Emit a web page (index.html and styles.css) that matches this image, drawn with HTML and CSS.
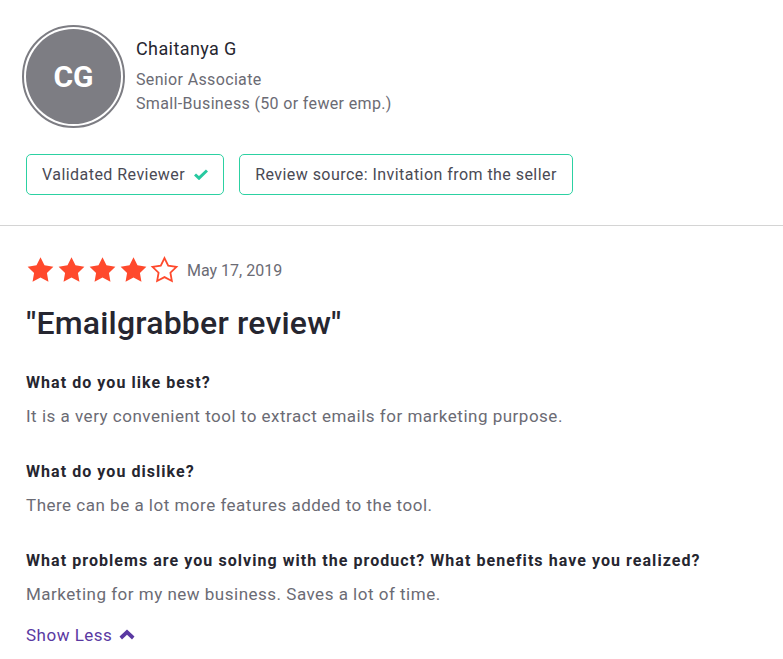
FILE: index.html
```html
<!DOCTYPE html>
<html lang="en">
<head>
    <meta charset="UTF-8">
    <meta name="viewport" content="width=device-width, initial-scale=1.0">
    <title>Review</title>
    <link rel="stylesheet" href="styles.css">
</head>
<body>
    <div class="reviewer">
        <div class="profile">
            <div class="avatar">
                <div class="avatar-inner">CG</div>
            </div>
            <div class="profile-info">
                <div class="name">Chaitanya G</div>
                <div class="meta">Senior Associate</div>
                <div class="meta">Small-Business (50 or fewer emp.)</div>
            </div>
        </div>
        <div class="badges">
            <div class="badge">
                Validated Reviewer
                <svg class="check" viewBox="0 0 14 11" width="14" height="11">
                    <path d="M1 5.5 L5 9.2 L13 1.5" fill="none" stroke="#27c9a0" stroke-width="3"/>
                </svg>
            </div>
            <div class="badge">Review source: Invitation from the seller</div>
        </div>
    </div>

    <div class="review">
        <div class="rating">
            <div class="stars">
                <svg class="star" viewBox="1 1 22 21"><path d="M12 2l3.09 6.26L22 9.27l-5 4.87 1.18 6.88L12 17.77l-6.18 3.25L7 14.14 2 9.27l6.91-1.01L12 2z" fill="#ff492c"/></svg>
                <svg class="star" viewBox="1 1 22 21"><path d="M12 2l3.09 6.26L22 9.27l-5 4.87 1.18 6.88L12 17.77l-6.18 3.25L7 14.14 2 9.27l6.91-1.01L12 2z" fill="#ff492c"/></svg>
                <svg class="star" viewBox="1 1 22 21"><path d="M12 2l3.09 6.26L22 9.27l-5 4.87 1.18 6.88L12 17.77l-6.18 3.25L7 14.14 2 9.27l6.91-1.01L12 2z" fill="#ff492c"/></svg>
                <svg class="star" viewBox="1 1 22 21"><path d="M12 2l3.09 6.26L22 9.27l-5 4.87 1.18 6.88L12 17.77l-6.18 3.25L7 14.14 2 9.27l6.91-1.01L12 2z" fill="#ff492c"/></svg>
                <svg class="star" viewBox="1 1 22 21"><path d="M12 2.6l2.9 5.9 6.4.9-4.7 4.6 1.1 6.4-5.7-3-5.7 3 1.1-6.4-4.7-4.6 6.4-.9z" fill="#fff" stroke="#ff492c" stroke-width="1.4"/></svg>
            </div>
            <span class="date">May 17, 2019</span>
        </div>

        <h2 class="title">"Emailgrabber review"</h2>

        <div class="qa">
            <div class="question">What do you like best?</div>
            <div class="answer">It is a very convenient tool to extract emails for marketing purpose.</div>
        </div>
        <div class="qa">
            <div class="question">What do you dislike?</div>
            <div class="answer">There can be a lot more features added to the tool.</div>
        </div>
        <div class="qa">
            <div class="question">What problems are you solving with the product? What benefits have you realized?</div>
            <div class="answer">Marketing for my new business. Saves a lot of time.</div>
        </div>

        <a class="show-less" href="#">
            Show Less
            <svg viewBox="0 0 16 12" width="16" height="12">
                <path d="M8 0.5 L15.5 7.5 L13 10.5 L8 5.8 L3 10.5 L0.5 7.5 Z" fill="#5a39a2"/>
            </svg>
        </a>
    </div>
</body>
</html>
```

FILE: styles.css
```css
/* styles.css */
body {
    margin: 0;
    background-color: #ffffff;
    font-family: Roboto, "Liberation Sans", sans-serif;
    color: #262630;
}

.reviewer {
    padding: 25px 26px 30px 22px;
    border-bottom: 1px solid #d4d4d4;
}

.profile {
    display: flex;
    gap: 11px;
}

.avatar {
    width: 95px;
    height: 95px;
    padding: 2px;
    border: 2px solid #7d7d83;
    border-radius: 50%;
    background-color: #ffffff;
}

.avatar-inner {
    width: 100%;
    height: 100%;
    border-radius: 50%;
    background-color: #7d7d83;
    color: #ffffff;
    font-size: 30px;
    font-weight: bold;
    display: flex;
    justify-content: center;
    align-items: center;
}

.profile-info {
    padding-top: 12px;
}

.name {
    font-size: 18px;
    line-height: 24px;
    letter-spacing: 0.4px;
    margin-bottom: 7px;
    color: #262630;
}

.meta {
    font-size: 16px;
    line-height: 24px;
    letter-spacing: 0.35px;
    color: #6b6b74;
}

.badges {
    display: flex;
    gap: 15px;
    margin-top: 26px;
    margin-left: 4px;
}

.badge {
    display: flex;
    align-items: center;
    gap: 9px;
    border: 1px solid #2cd1a2;
    border-radius: 5px;
    padding: 9px 15px;
    font-size: 16px;
    line-height: 21px;
    letter-spacing: 0.45px;
    color: #4a4a54;
}

.review {
    padding: 30px 26px 0 26px;
}

.rating {
    display: flex;
    align-items: center;
    gap: 8px;
}

.stars {
    display: flex;
    gap: 2px;
}

.star {
    width: 29px;
    height: 27px;
}

.date {
    font-size: 16px;
    line-height: 22px;
    padding-top: 3px;
    color: #6b6b74;
}

.title {
    margin: 22px 0 31px 0;
    font-size: 32px;
    line-height: 36px;
    letter-spacing: 0.2px;
    font-weight: 500;
    color: #262630;
}

.qa {
    margin-bottom: 34px;
}

.question {
    font-size: 16px;
    line-height: 22px;
    letter-spacing: 1.05px;
    font-weight: bold;
    color: #262630;
}

.answer {
    margin-top: 11px;
    font-size: 17px;
    line-height: 22px;
    letter-spacing: 0.5px;
    color: #6b6b74;
}

.show-less {
    display: flex;
    width: fit-content;
    align-items: center;
    gap: 7px;
    margin-top: -15px;
    font-size: 17px;
    line-height: 22px;
    letter-spacing: 0.5px;
    color: #5a39a2;
    text-decoration: none;
}
```
